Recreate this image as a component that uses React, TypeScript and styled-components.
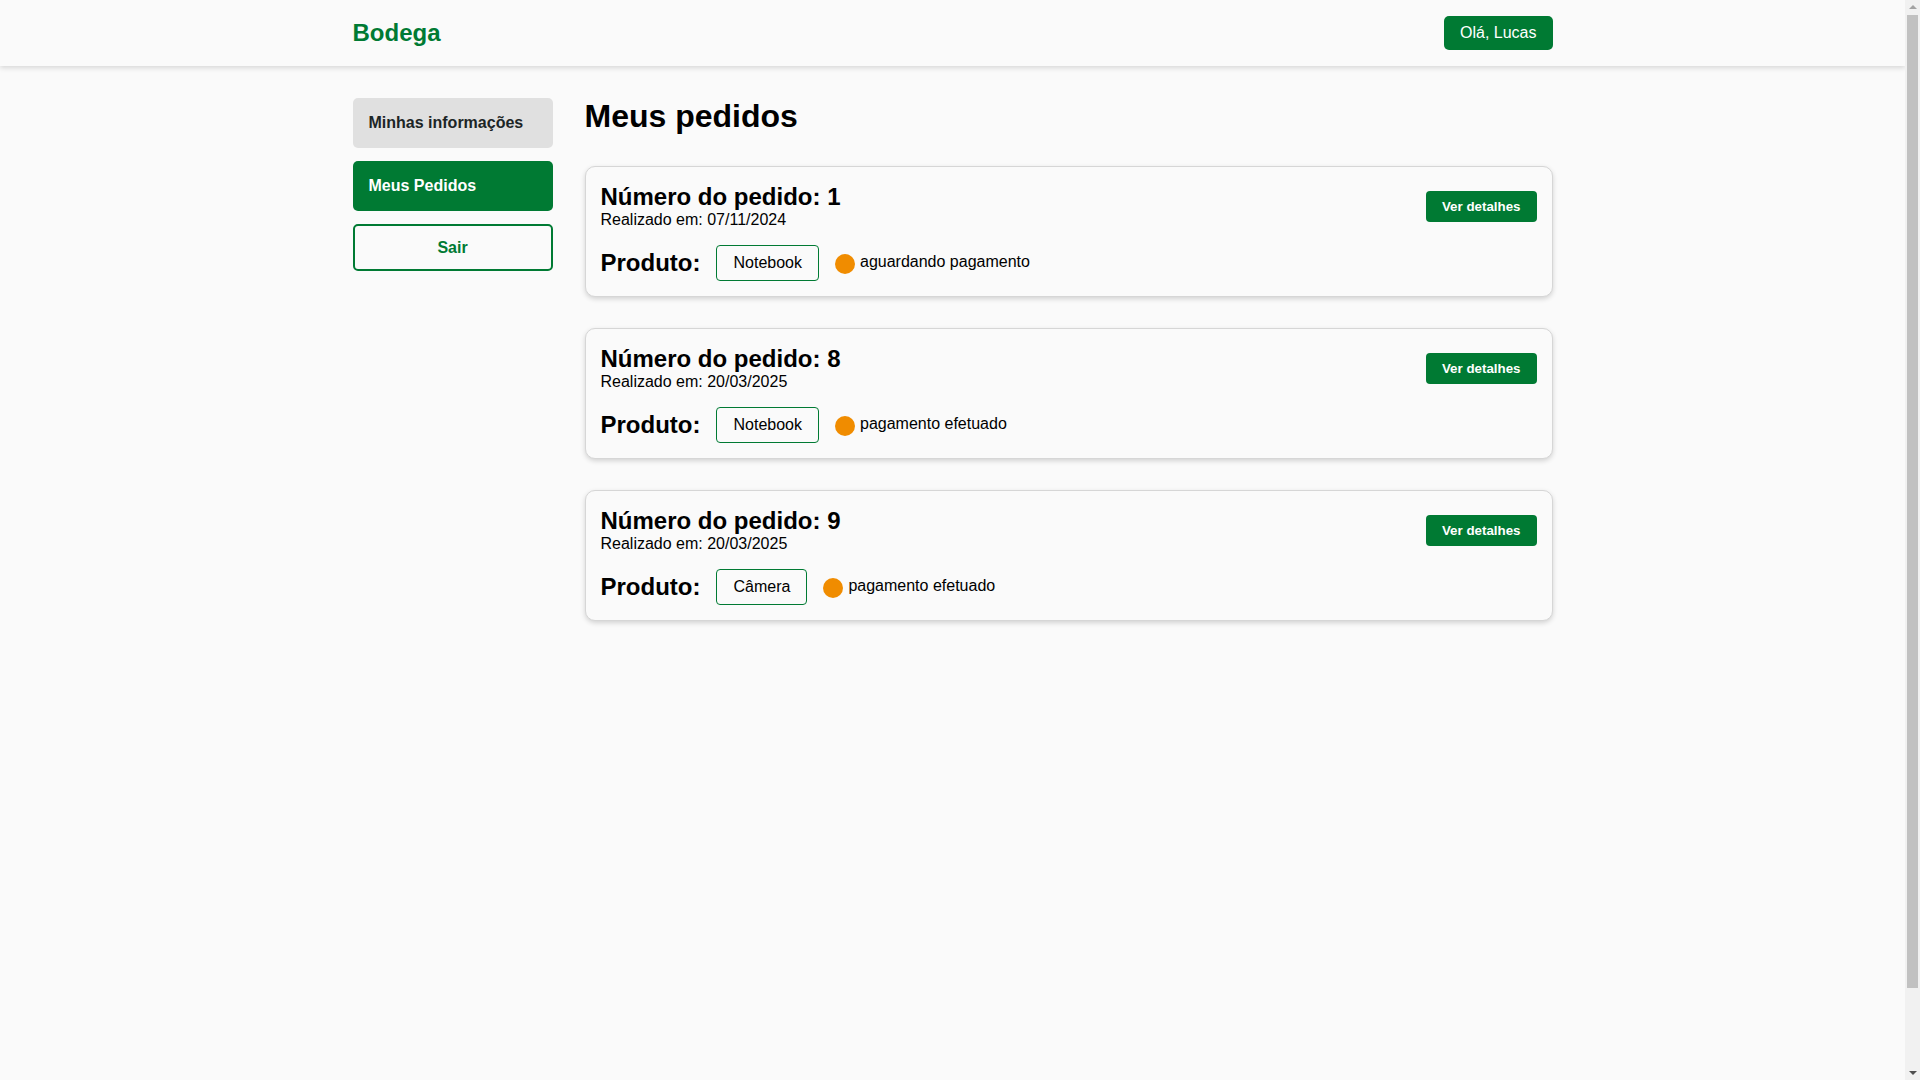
import React, { FC } from "react";
import styled, { createGlobalStyle } from "styled-components";

const GREEN = "#007a33";
const SCROLLBAR = 15;

const GlobalStyle = createGlobalStyle`
  * { box-sizing: border-box; }
  html, body {
    margin: 0;
    padding: 0;
    background: #fafafa;
    font-family: "Liberation Sans", Arial, sans-serif;
    color: #000;
  }
  html { scrollbar-width: none; }
  body::-webkit-scrollbar { display: none; }
`;

// the reference shows the browser's classic scrollbar; drawn here since headless hides it
const ScrollTrack = styled.div`
  position: fixed;
  top: 0;
  right: 0;
  width: ${SCROLLBAR}px;
  height: 100vh;
  background: #f1f1f1;
  z-index: 10;
`;

const ScrollThumb = styled.div`
  position: absolute;
  top: 15px;
  left: 2px;
  right: 2px;
  height: 973px;
  background: #c1c1c1;
`;

const ScrollArrow = styled.div<{ $down?: boolean }>`
  position: absolute;
  left: 4px;
  width: 0;
  height: 0;
  border-left: 4px solid transparent;
  border-right: 4px solid transparent;
  ${({ $down }) =>
    $down
      ? `bottom: 5px; border-top: 4px solid #505050;`
      : `top: 5px; border-bottom: 4px solid #a3a3a3;`}
`;

const Frame = styled.div`
  width: calc(100% - ${SCROLLBAR}px);
`;

const Header = styled.header`
  height: 66px;
  background: #fafafa;
  box-shadow: 0 2px 5px rgba(0, 0, 0, 0.14);
  position: relative;
  z-index: 1;
`;

const Container = styled.div`
  width: 1200px;
  margin: 0 auto;
`;

const HeaderInner = styled(Container)`
  height: 100%;
  display: flex;
  align-items: center;
  justify-content: space-between;
`;

const Logo = styled.div`
  font-size: 24px;
  font-weight: 700;
  color: ${GREEN};
`;

const UserButton = styled.button`
  font-family: inherit;
  font-size: 16px;
  line-height: 18px;
  padding: 8px 16px;
  border: none;
  border-radius: 5px;
  background: ${GREEN};
  color: #fff;
  cursor: pointer;
`;

const Page = styled.main`
  min-height: 100vh;
  padding-top: 32px;
  padding-bottom: 20px;
`;

const Layout = styled(Container)`
  display: flex;
  gap: 32px;
  align-items: flex-start;
`;

const Sidebar = styled.nav`
  width: 200px;
  flex: 0 0 200px;
  display: flex;
  flex-direction: column;
  gap: 13px;
`;

const SideItem = styled.a<{ $active?: boolean }>`
  display: block;
  padding: 16px;
  line-height: 18px;
  font-size: 16px;
  font-weight: 700;
  border-radius: 5px;
  text-decoration: none;
  background: ${({ $active }) => ($active ? GREEN : "#e0e0e0")};
  color: ${({ $active }) => ($active ? "#fff" : "#1c2526")};
  cursor: pointer;
`;

const LogoutButton = styled.button`
  font-family: inherit;
  font-size: 16px;
  font-weight: 700;
  line-height: 19px;
  padding: 12px 16px;
  border: 2px solid ${GREEN};
  border-radius: 5px;
  background: transparent;
  color: ${GREEN};
  cursor: pointer;
`;

const Content = styled.section`
  flex: 1;
  display: flex;
  flex-direction: column;
  gap: 31px;
`;

const Title = styled.h1`
  margin: 0;
  font-size: 32px;
  line-height: 37px;
  font-weight: 700;
`;

const OrderList = styled.div`
  display: flex;
  flex-direction: column;
  gap: 31px;
`;

const Card = styled.article`
  background: #fafafa;
  border: 1px solid #d6d6d6;
  border-radius: 10px;
  box-shadow: 0 2px 5px rgba(0, 0, 0, 0.16);
  padding: 16px 15px 15px;
  display: flex;
  flex-direction: column;
  gap: 16px;
`;

const CardTop = styled.div`
  display: flex;
  align-items: center;
  justify-content: space-between;
`;

const OrderNumber = styled.h2`
  margin: 0;
  font-size: 24px;
  line-height: 28px;
  font-weight: 700;
`;

const OrderDate = styled.p`
  margin: 0;
  font-size: 16px;
  line-height: 18px;
`;

const DetailsButton = styled.button`
  font-family: inherit;
  font-size: 13.33px;
  font-weight: 700;
  line-height: 15px;
  padding: 8px 16px;
  border: none;
  border-radius: 4px;
  background: ${GREEN};
  color: #fff;
  cursor: pointer;
`;

const ProductRow = styled.div`
  display: flex;
  align-items: center;
`;

const ProductLabel = styled.span`
  font-size: 24px;
  font-weight: 700;
  margin-right: 16px;
`;

const ProductTag = styled.span`
  display: inline-block;
  border: 1px solid ${GREEN};
  border-radius: 4px;
  padding: 8px 16px;
  font-size: 16px;
  line-height: 18px;
  margin-right: 16px;
`;

const Status = styled.span`
  display: inline-flex;
  align-items: center;
  gap: 5px;
  font-size: 16px;
  line-height: 18px;
  margin-top: -2px;
`;

const StatusDot = styled.span`
  width: 20px;
  height: 20px;
  border-radius: 50%;
  background: #f08c00;
  margin-top: 3px;
`;

type Order = {
  id: number;
  date: string;
  product: string;
  status: string;
};

const orders: Order[] = [
  { id: 1, date: "07/11/2024", product: "Notebook", status: "aguardando pagamento" },
  { id: 8, date: "20/03/2025", product: "Notebook", status: "pagamento efetuado" },
  { id: 9, date: "20/03/2025", product: "Câmera", status: "pagamento efetuado" },
];

const OrderCard: FC<{ order: Order }> = ({ order }) => (
  <Card>
    <CardTop>
      <div>
        <OrderNumber>Número do pedido: {order.id}</OrderNumber>
        <OrderDate>Realizado em: {order.date}</OrderDate>
      </div>
      <DetailsButton>Ver detalhes</DetailsButton>
    </CardTop>
    <ProductRow>
      <ProductLabel>Produto:</ProductLabel>
      <ProductTag>{order.product}</ProductTag>
      <Status>
        <StatusDot />
        {order.status}
      </Status>
    </ProductRow>
  </Card>
);

const App: FC = () => (
  <>
    <GlobalStyle />
    <Frame>
      <Header>
        <HeaderInner>
          <Logo>Bodega</Logo>
          <UserButton>Olá, Lucas</UserButton>
        </HeaderInner>
      </Header>
      <Page>
        <Layout>
          <Sidebar>
            <SideItem>Minhas informações</SideItem>
            <SideItem $active>Meus Pedidos</SideItem>
            <LogoutButton>Sair</LogoutButton>
          </Sidebar>
          <Content>
            <Title>Meus pedidos</Title>
            <OrderList>
              {orders.map((order) => (
                <OrderCard key={order.id} order={order} />
              ))}
            </OrderList>
          </Content>
        </Layout>
      </Page>
    </Frame>
    <ScrollTrack>
      <ScrollArrow />
      <ScrollThumb />
      <ScrollArrow $down />
    </ScrollTrack>
  </>
);

export default App;
